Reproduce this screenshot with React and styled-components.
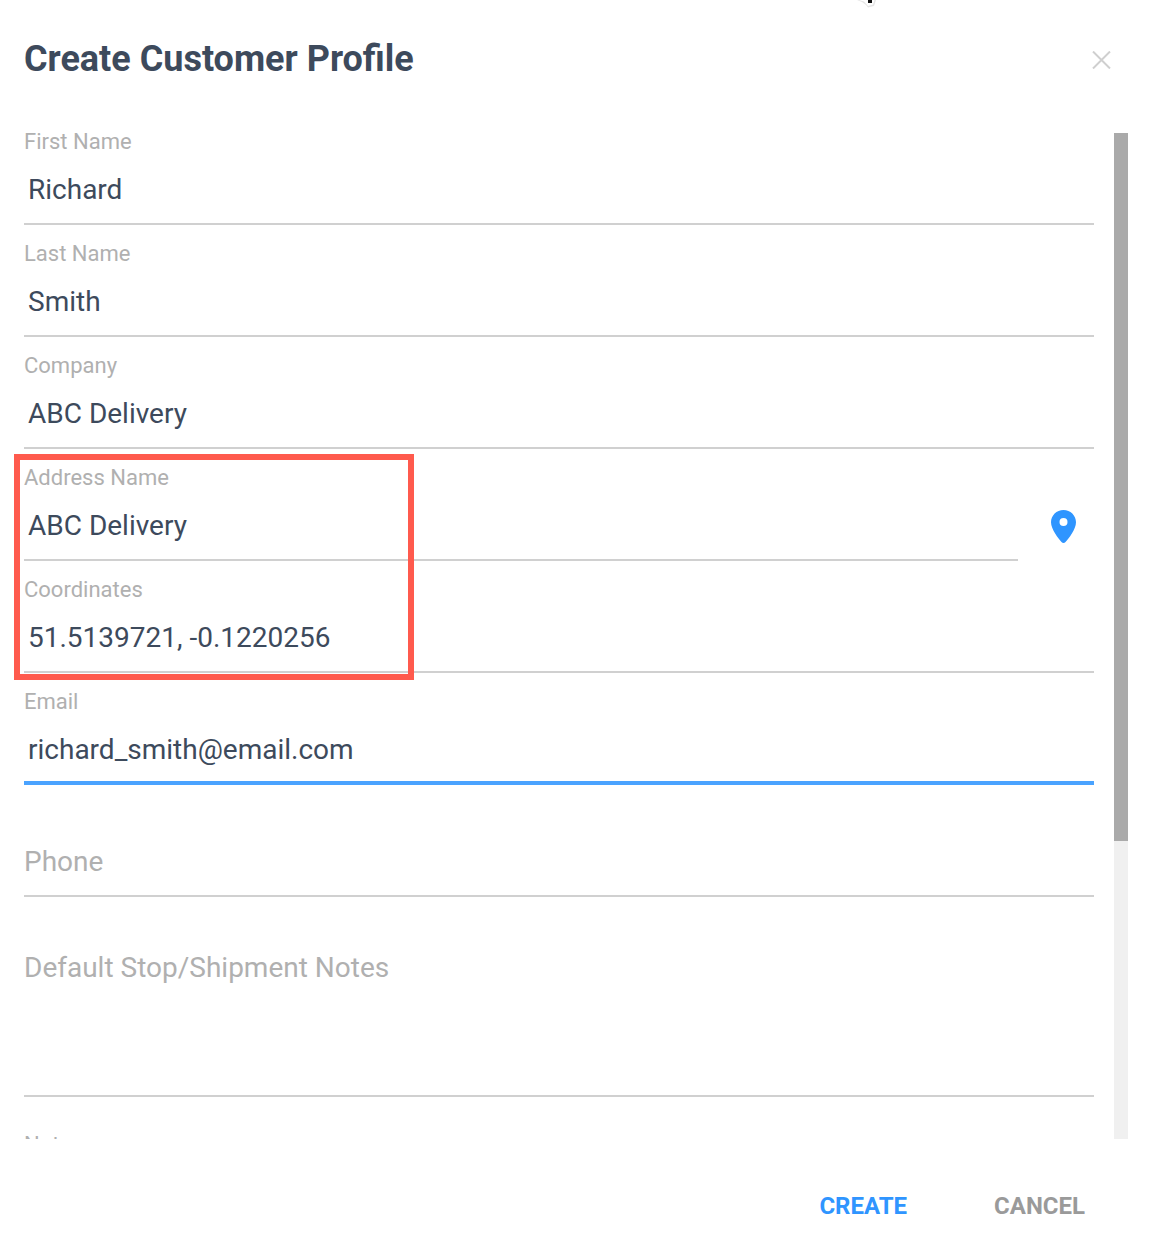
import React from "react";
import styled, { createGlobalStyle } from "styled-components";

const Global = createGlobalStyle`
  html, body { margin: 0; padding: 0; background: #fff; }
  body { font-family: Roboto, "Liberation Sans", sans-serif; }
`;

const Dialog = styled.div`
  position: relative;
  width: 1150px;
  height: 1252px;
  overflow: hidden;
  background: #fff;
  display: flex;
  flex-direction: column;
`;

const Header = styled.header`
  height: 113px;
  flex: none;
  padding: 0 39px 0 24px;
  box-sizing: border-box;
  display: flex;
  align-items: flex-start;
  justify-content: space-between;
`;

const Title = styled.h1`
  margin: 38px 0 0;
  font-size: 36px;
  line-height: 42px;
  font-weight: 700;
  color: #3d4a5c;
`;

const CloseButton = styled.button`
  margin-top: 51px;
  padding: 0;
  border: 0;
  background: none;
  width: 19px;
  height: 18px;
  display: block;
  svg { display: block; }
`;

const Body = styled.div`
  height: 1026px;
  flex: none;
  padding-left: 24px;
  display: flex;
`;

const Viewport = styled.div`
  width: 1070px;
  height: 100%;
  overflow: hidden;
  flex: none;
`;

const Track = styled.div`
  width: 14px;
  margin: 20px 0 0 20px;
  background: #f0f0f0;
  flex: none;
`;

const Thumb = styled.div`
  height: 708px;
  background: #aaaaaa;
`;

const Field = styled.div`
  height: ${(p) => p.$height || 112}px;
  box-sizing: border-box;
  flex: 1;
  min-width: 0;
  position: relative;
  border-bottom: ${(p) => (p.$focused ? "4px solid #4aa3ff" : "2px solid #d0d0d0")};
`;

const Label = styled.label`
  display: block;
  padding-top: ${(p) => p.$top || 17}px;
  font-size: 22px;
  line-height: 24px;
  color: #b0b0b0;
`;

const Value = styled.div`
  margin-top: 19px;
  padding-left: 4px;
  font-size: 28px;
  line-height: 34px;
  color: #3d4a5c;
`;

const Placeholder = styled.div`
  padding-top: ${(p) => p.$top}px;
  font-size: 28px;
  line-height: 34px;
  color: #b0b0b0;
`;

const FieldRow = styled.div`
  display: flex;
`;

const PinSlot = styled.div`
  width: 76px;
  flex: none;
  padding: 61px 0 0 33px;
  box-sizing: border-box;
  svg { display: block; }
`;

const Footer = styled.footer`
  flex: 1;
  display: flex;
  justify-content: flex-end;
  align-items: flex-start;
  gap: 87px;
  padding: 52px 65px 0 0;
`;

const ActionButton = styled.button`
  padding: 0;
  border: 0;
  background: none;
  font-family: inherit;
  font-size: 24px;
  line-height: 30px;
  font-weight: 700;
  color: ${(p) => (p.$primary ? "#2f95ff" : "#9a9a9a")};
`;

const Highlight = styled.div`
  position: absolute;
  left: 14px;
  top: 454px;
  width: 400px;
  height: 226px;
  box-sizing: border-box;
  border: 6px solid #ff5a4d;
  pointer-events: none;
`;

const Cursor = styled.svg`
  position: absolute;
  left: 855px;
  top: 0;
`;

const fields = [
  ["First Name", "Richard"],
  ["Last Name", "Smith"],
  ["Company", "ABC Delivery"],
];

export default function App() {
  return (
    <Dialog>
      <Global />
      <Cursor width="24" height="10" viewBox="0 0 24 10">
        <path d="M2 0l5 2 4 3 2 2.500 6-1.500 2-6z" fill="#000" opacity="0.1" />
        <path d="M4 0l5 1.500 4 4.500 5-1.500 1.500-4.500z" fill="#fff" />
        <rect x="13" y="0" width="4" height="3" fill="#111" />
      </Cursor>
      <Header>
        <Title>Create Customer Profile</Title>
        <CloseButton aria-label="Close">
          <svg width="19" height="18" viewBox="0 0 19 18">
            <path d="M1 0.500L18 17.500M18 0.500L1 17.500" stroke="#cfcfcf" strokeWidth="2" fill="none" />
          </svg>
        </CloseButton>
      </Header>
      <Body>
        <Viewport>
          {fields.map(([label, value]) => (
            <Field key={label}>
              <Label>{label}</Label>
              <Value>{value}</Value>
            </Field>
          ))}
          <FieldRow>
            <Field>
              <Label>Address Name</Label>
              <Value>ABC Delivery</Value>
            </Field>
            <PinSlot>
              <svg width="25" height="33" viewBox="0 0 25 33">
                <path
                  fillRule="evenodd"
                  fill="#2f95ff"
                  d="M12.500 0C5.600 0 0 5.500 0 12.300c0 7 7.500 16.500 10.500 19.700c1.100 1.300 2.900 1.300 4 0C17.500 28.800 25 19.300 25 12.300C25 5.500 19.400 0 12.500 0zM12.500 8a4 4 0 1 1 0 8a4 4 0 0 1 0-8z"
                />
              </svg>
            </PinSlot>
          </FieldRow>
          <Field>
            <Label>Coordinates</Label>
            <Value>51.5139721, -0.1220256</Value>
          </Field>
          <Field $focused>
            <Label>Email</Label>
            <Value>richard_smith@email.com</Value>
          </Field>
          <Field>
            <Placeholder $top={60}>Phone</Placeholder>
          </Field>
          <Field $height={200}>
            <Placeholder $top={54}>Default Stop/Shipment Notes</Placeholder>
          </Field>
          <Field>
            <Label $top={36}>Notes</Label>
          </Field>
        </Viewport>
        <Track>
          <Thumb />
        </Track>
      </Body>
      <Footer>
        <ActionButton $primary>CREATE</ActionButton>
        <ActionButton>CANCEL</ActionButton>
      </Footer>
      <Highlight />
    </Dialog>
  );
}
